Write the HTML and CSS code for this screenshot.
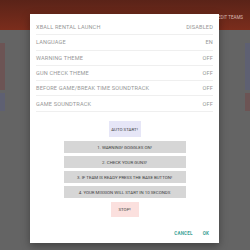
FILE: index.html
```html
<!DOCTYPE html>
<html lang="en">
<head>
    <meta charset="UTF-8">
    <meta name="viewport" content="width=device-width, initial-scale=1.0">
    <title>Game Settings</title>
    <link rel="stylesheet" href="styles.css">
</head>
<body>
    <!-- Page behind the dialog -->
    <div class="page">
        <div class="top-bar">
            <span class="top-action">EDIT TEAMS</span>
        </div>
        <div class="team-list">
            <div class="team-row">
                <div class="team-card red"></div>
                <div class="team-card blue"></div>
            </div>
            <div class="team-row">
                <div class="team-card blue"></div>
                <div class="team-card red"></div>
            </div>
        </div>
    </div>

    <!-- Settings dialog -->
    <div class="dialog">
        <ul class="settings">
            <li><span>XBALL RENTAL LAUNCH</span><span>DISABLED</span></li>
            <li><span>LANGUAGE</span><span>EN</span></li>
            <li><span>WARNING THEME</span><span>OFF</span></li>
            <li><span>GUN CHECK THEME</span><span>OFF</span></li>
            <li><span>BEFORE GAME/BREAK TIME SOUNDTRACK</span><span>OFF</span></li>
            <li><span>GAME SOUNDTRACK</span><span>OFF</span></li>
        </ul>

        <div class="actions">
            <button class="btn auto">AUTO START!</button>
            <div class="steps">
                <button class="btn step">1. WARNING! GOGGLES ON!</button>
                <button class="btn step">2. CHECK YOUR GUNS!</button>
                <button class="btn step">3. IF TEAM IS READY PRESS THE BASE BUTTON!</button>
                <button class="btn step">4. YOUR MISSION WILL START IN 10 SECONDS</button>
            </div>
            <button class="btn stop">STOP!</button>
        </div>

        <div class="dialog-footer">
            <button class="text-btn">CANCEL</button>
            <button class="text-btn">OK</button>
        </div>
    </div>
</body>
</html>
```

FILE: styles.css
```css
body {
    margin: 0;
    font-family: Roboto, "Noto Sans", sans-serif;
    background-color: #646464;
    width: 250px;
    height: 250px;
    overflow: hidden;
    position: relative;
}

/* Background page (already dimmed by the dialog scrim) */
.page {
    height: 250px;
}

.top-bar {
    height: 30px;
    background: linear-gradient(#5a2318, #7b2d1c);
    display: flex;
    justify-content: flex-end;
    align-items: center;
    padding-right: 7px;
}

.top-action {
    color: #d9bcb4;
    font-size: 4.5px;
    margin-top: 4px;
}

.team-list {
    display: flex;
    flex-direction: column;
    gap: 3px;
    padding-top: 13px;
}

.team-row {
    display: flex;
    justify-content: space-between;
}

.team-row:first-child .team-card {
    height: 47px;
}

.team-row:last-child .team-card {
    height: 18px;
}

.team-card {
    width: 5px;
}

.team-card.red {
    background-color: #6c5454;
}

.team-card.blue {
    background-color: #5e6072;
}

/* Dialog */
.dialog {
    position: absolute;
    left: 30px;
    top: 14px;
    width: 189px;
    height: 229px;
    background-color: #ffffff;
    box-shadow: 0 3px 8px rgba(0, 0, 0, 0.35);
    display: flex;
    flex-direction: column;
    box-sizing: border-box;
    padding: 6px 6px 0;
}

.settings {
    list-style: none;
    margin: 0;
    padding: 0;
}

.settings li {
    height: 14.3px;
    border-bottom: 1px solid #efefef;
    display: flex;
    justify-content: space-between;
    align-items: center;
    font-size: 5.6px;
    letter-spacing: 0.15px;
    color: #979797;
}

.actions {
    display: flex;
    flex-direction: column;
    align-items: center;
    padding-top: 9.5px;
}

.btn {
    border: none;
    font-family: inherit;
    font-size: 4.4px;
    color: #404040;
    padding: 0;
    cursor: pointer;
}

.auto {
    width: 32px;
    height: 15.5px;
    background-color: #e6e6f7;
}

.steps {
    display: flex;
    flex-direction: column;
    gap: 3.3px;
    margin-top: 4.6px;
}

.step {
    width: 122px;
    height: 11.7px;
    background-color: #d6d6d6;
}

.stop {
    width: 28px;
    height: 15px;
    margin-top: 4px;
    background-color: #fbe0de;
}

.dialog-footer {
    margin-top: auto;
    height: 20px;
    display: flex;
    justify-content: flex-end;
    align-items: center;
    gap: 10px;
    padding-right: 4px;
}

.text-btn {
    background: none;
    border: none;
    padding: 0;
    font-family: inherit;
    font-size: 4.5px;
    font-weight: bold;
    color: #3aa294;
    letter-spacing: 0.2px;
}
```
